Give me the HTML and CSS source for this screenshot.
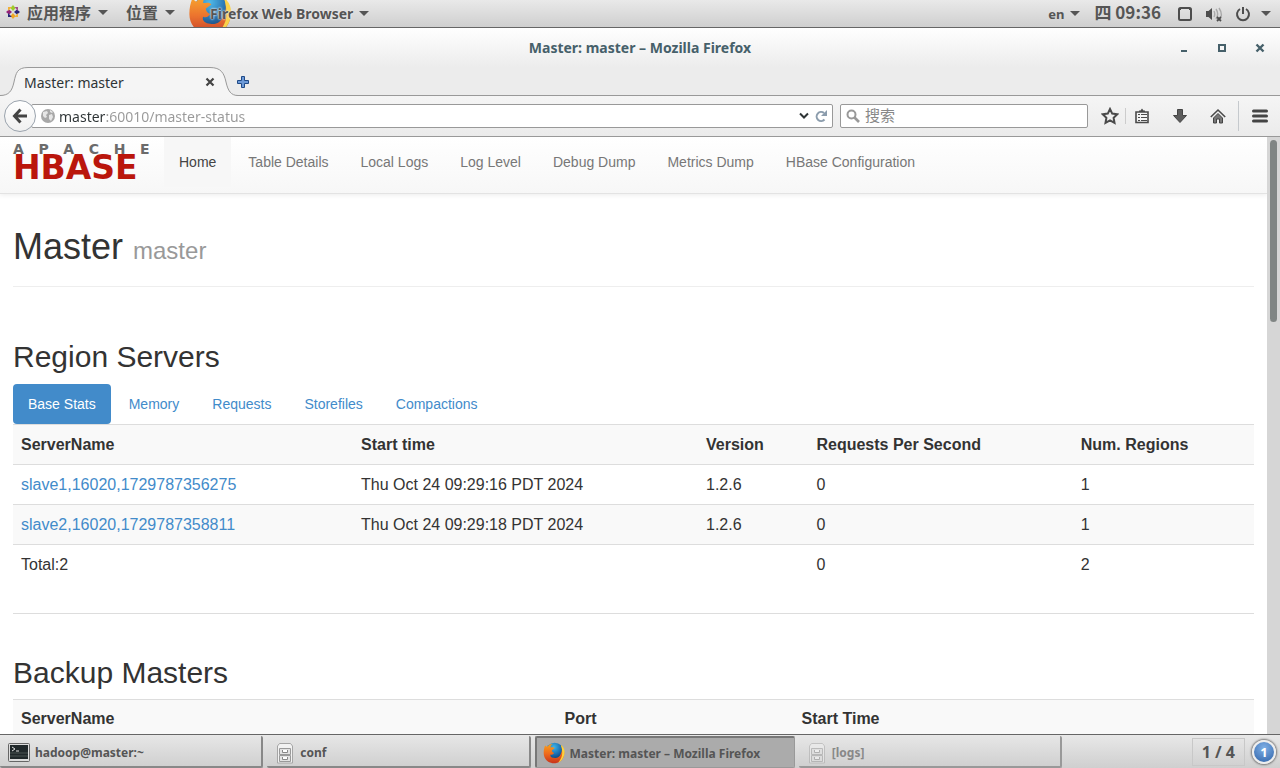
FILE: index.html
```html
<!DOCTYPE html>
<html lang="zh-CN">
<head>
<meta charset="utf-8">
<title>Master: master</title>
<link rel="stylesheet" href="styles.css">
</head>
<body>
<svg class="defs" aria-hidden="true">
  <defs>
    <linearGradient id="fox" x1="0" y1="0" x2="0" y2="1"><stop offset="0" stop-color="#f9a01b"/><stop offset=".5" stop-color="#ee6a1c"/><stop offset="1" stop-color="#c8321a"/></linearGradient>
    <radialGradient id="globe" cx=".45" cy=".25" r=".8"><stop offset="0" stop-color="#3fb6ea"/><stop offset=".55" stop-color="#1668ab"/><stop offset="1" stop-color="#0a2c5c"/></radialGradient>
    <symbol id="firefox" viewBox="0 0 32 32">
      <circle cx="17" cy="14" r="13" fill="url(#globe)"/>
      <path fill="url(#fox)" d="M3 5C2 8 1 11 1 16c0 9 7 15 15 15 9 0 15-7 15-15 0-5-2-9-5-12 2 5 2 9 0 13-2 5-6 7-10 6-4 0-6-3-5-5 2 1 4 0 5-2-2-1-3-2-3-4l4-3c-2-2-4-1-6-1 0-2 1-4 3-5-4 0-6 2-8 4-1-1-2-1-3-2z"/>
      <path fill="#fdd23b" d="M26 4c5 4 6 9 5 14-1 6-5 10-9 12 4-5 6-9 6-14 0-5-1-9-2-12z"/>
    </symbol>
    <symbol id="cabinet" viewBox="0 0 18 22">
      <path d="M1.500 21V4L3.500 1.500h11L16.500 4v17z" fill="#f2f2f2" stroke="#a5a5a5"/>
      <path d="M3.500 6.500h11v6h-11zM3.500 13.500h11v6h-11z" fill="#e2e2e2" stroke="#999"/>
      <path d="M6.500 8v2.500h5V8M6.500 15v2.500h5V15" fill="#fff" stroke="#888"/>
    </symbol>
  </defs>
</svg>

<header class="panel">
  <nav class="panel-group" aria-label="桌面菜单">
    <button class="panel-item cjk">
      <svg width="14" height="14" viewBox="0 0 14 14"><path d="M7 0l2.500 3L7 6 4.500 3z" fill="#9ccd2a"/><path d="M7 14l2.500-3L7 8l-2.500 3z" fill="#efa724"/><path d="M0 7l3-2.500L6 7 3 9.500z" fill="#932279"/><path d="M14 7l-3-2.500L8 7l3 2.500z" fill="#262577"/><path d="M2 2h3.500v.5l-3 3H2zM8.500 12H12V8.500h-.5z" fill="#efb03a"/><path d="M8.500 2H12v3.500h-.5z" fill="#a14f8c"/><path d="M2 8.500h.5l3 3v.5H2z" fill="#262577"/></svg>
      <span>应用程序</span><i class="arrow"></i>
    </button>
    <button class="panel-item cjk places"><span>位置</span><i class="arrow"></i></button>
    <button class="panel-item app-menu">
      <svg class="app-icon" width="44" height="44"><use href="#firefox"/></svg>
      <span class="app-name">Firefox Web Browser</span><i class="arrow"></i>
    </button>
  </nav>
  <div class="panel-group status">
    <button class="panel-item"><span>en</span><i class="arrow"></i></button>
    <time class="clock">四 09:36</time>
    <button class="panel-item" aria-label="屏幕"><svg width="16" height="16" viewBox="0 0 16 16" fill="none" stroke="#4d4d4d" stroke-width="2"><rect x="2" y="2" width="12" height="12" rx="1.500"/><path d="M2 5l3-3M11 2l3 3M2 12l2 2M12 14l2-2" stroke-width="1"/></svg></button>
    <button class="panel-item" aria-label="音量"><svg width="18" height="16" viewBox="0 0 18 16"><path d="M1 5h2.500L7 2v12l-3.500-3H1z" fill="#4d4d4d"/><path d="M9 5c1 2 1 4 0 6M11 3c2 3 2 7 0 10M14 2c2 3 3 6 2 9" fill="none" stroke="#aaa" stroke-width="1.400"/><path d="M12 11l4 4M16 11l-4 4" stroke="#4d4d4d" stroke-width="1.800"/></svg></button>
    <button class="panel-item" aria-label="电源"><svg width="16" height="16" viewBox="0 0 16 16" fill="none" stroke="#4d4d4d" stroke-width="2"><path d="M5 3a6 6 0 1 0 6 0M8 1v7"/></svg><i class="arrow"></i></button>
  </div>
</header>

<div class="titlebar">
  <div class="window-title">Master: master – Mozilla Firefox</div>
  <div class="window-buttons">
    <button aria-label="最小化"><svg width="10" height="10" viewBox="0 0 10 10"><path d="M2 7h6v2H2z" fill="#46606a"/></svg></button>
    <button aria-label="最大化"><svg width="10" height="10" viewBox="0 0 10 10"><path d="M2 2h6v6H2z" fill="none" stroke="#46606a" stroke-width="2"/></svg></button>
    <button aria-label="关闭"><svg width="10" height="10" viewBox="0 0 10 10"><path d="M1.500 1.500l7 7M8.500 1.500l-7 7" stroke="#46606a" stroke-width="2.400"/></svg></button>
  </div>
</div>

<div class="tabs">
  <div class="tab">
    <svg class="tab-shape" width="238" height="30" viewBox="0 0 238 30"><path d="M0 28.500C9 28.500 12 24 14 15C16 6 17 .5 28 .5H210C221 .5 224 6 226 15C228 24 231 28.500 238 28.500V30H0z" fill="#f5f5f5"/><path d="M0 28.500C9 28.500 12 24 14 15C16 6 17 .5 28 .5H210C221 .5 224 6 226 15C228 24 231 28.500 238 28.500" fill="none" stroke="#999"/></svg>
    <span class="tab-title">Master: master</span>
    <button class="tab-close" aria-label="关闭标签页"><svg width="10" height="10" viewBox="0 0 10 10"><path d="M1.500 1.500l7 7M8.500 1.500l-7 7" stroke="#444" stroke-width="2.200"/></svg></button>
  </div>
  <button class="new-tab" aria-label="新标签页"><svg width="12" height="12" viewBox="0 0 12 12"><path d="M4.500.5h3v4h4v3h-4v4h-3v-4h-4v-3h4z" fill="#6d9ad8" stroke="#204a87"/></svg></button>
</div>

<div class="toolbar">
  <button class="back" aria-label="后退"><svg width="16" height="16" viewBox="0 0 16 16" fill="none" stroke="#444" stroke-width="3"><path d="M8.500 1.500L2.500 8l6 6.500M3 8h12"/></svg></button>
  <div class="field url">
    <svg width="14" height="14" viewBox="0 0 14 14"><circle cx="7" cy="7" r="7" fill="#a8a8a8"/><path d="M2 3l4-1 1 2-2 2 1 2-2 1-2-2zM8 6l3-1 1 3-2 4-2-2zM9 1l3 2-1 1-2-1z" fill="#e6e6e6"/></svg>
    <input class="url-input" aria-label="地址" value="master:60010/master-status">
    <button aria-label="历史"><svg width="10" height="8" viewBox="0 0 10 8" fill="none" stroke="#2e3436" stroke-width="2"><path d="M1 1.500l4 4 4-4"/></svg></button>
    <button aria-label="刷新"><svg width="12" height="12" viewBox="0 0 12 12"><path d="M9.500 9.500A4.500 4.500 0 1 1 9 3" fill="none" stroke="#8c9dad" stroke-width="2"/><path d="M12 0v6H6z" fill="#8c9dad"/></svg></button>
  </div>
  <div class="field search">
    <svg width="14" height="14" viewBox="0 0 14 14" fill="none" stroke="#999"><circle cx="5.500" cy="5.500" r="4" stroke-width="2"/><path d="M8.500 8.500L13 13" stroke-width="2.600"/></svg>
    <input class="search-input" aria-label="搜索" placeholder="搜索">
  </div>
  <div class="tools">
    <button aria-label="收藏"><svg width="18" height="18" viewBox="0 0 18 18"><path d="M9 2l2.200 4.600 5 .7-3.600 3.500.9 5L9 13.400l-4.500 2.400.9-5L1.800 7.300l5-.7z" fill="none" stroke="#4a4a4a" stroke-width="2"/></svg></button>
    <button class="bookmarks" aria-label="书签"><svg width="16" height="16" viewBox="0 0 16 16"><path d="M2 4h12v10.500H2z" fill="#f4f4f4" stroke="#4a4a4a" stroke-width="1.600"/><path d="M5 4V2.500h1.500L8 .5l1.500 2H11V4z" fill="#4a4a4a"/><path d="M4 6.500h2M7 6.500h6M4 9.500h2M7 9.500h6M4 12.500h2M7 12.500h6" stroke="#4a4a4a" stroke-width="1.200"/></svg></button>
    <button aria-label="下载"><svg width="16" height="16" viewBox="0 0 16 16"><path d="M5.500 1.500h5v6h4L8 14.500 1.500 7.500h4z" fill="#5c5c5c" stroke="#444"/></svg></button>
    <button aria-label="主页"><svg width="16" height="16" viewBox="0 0 16 16"><path d="M.8 9L8 2l7.200 7" fill="none" stroke="#4a4a4a" stroke-width="1.600"/><path d="M3.500 10L8 5.500l4.500 4.500V15H9.500v-4h-3v4h-3z" fill="#777" stroke="#444"/></svg></button>
    <button class="menu" aria-label="菜单"><svg width="16" height="14" viewBox="0 0 16 14" stroke="#444" stroke-width="3" stroke-linecap="round"><path d="M1.500 2h13M1.500 7h13M1.500 12h13"/></svg></button>
  </div>
</div>

<div class="viewport">
  <div class="page">
    <nav class="navbar">
      <a class="brand" href="#" aria-label="Apache HBase"><span class="brand-top">A   P   A   C   H   E</span><span class="brand-name">HBASE</span></a>
      <a class="nav-link current" href="#">Home</a>
      <a class="nav-link" href="#">Table Details</a>
      <a class="nav-link" href="#">Local Logs</a>
      <a class="nav-link" href="#">Log Level</a>
      <a class="nav-link" href="#">Debug Dump</a>
      <a class="nav-link" href="#">Metrics Dump</a>
      <a class="nav-link" href="#">HBase Configuration</a>
    </nav>
    <main class="container">
      <h1 class="page-header">Master <small>master</small></h1>
      <section class="section">
        <h2>Region Servers</h2>
        <div class="pills">
          <a class="pill on" href="#">Base Stats</a>
          <a class="pill" href="#">Memory</a>
          <a class="pill" href="#">Requests</a>
          <a class="pill" href="#">Storefiles</a>
          <a class="pill" href="#">Compactions</a>
        </div>
        <table class="table servers">
          <colgroup><col class="c-name"><col class="c-start"><col class="c-version"><col class="c-requests"><col></colgroup>
          <tbody>
            <tr><th>ServerName</th><th>Start time</th><th>Version</th><th>Requests Per Second</th><th>Num. Regions</th></tr>
            <tr><td><a href="#">slave1,16020,1729787356275</a></td><td>Thu Oct 24 09:29:16 PDT 2024</td><td>1.2.6</td><td>0</td><td>1</td></tr>
            <tr><td><a href="#">slave2,16020,1729787358811</a></td><td>Thu Oct 24 09:29:18 PDT 2024</td><td>1.2.6</td><td>0</td><td>1</td></tr>
            <tr><td>Total:2</td><td></td><td></td><td>0</td><td>2</td></tr>
          </tbody>
        </table>
      </section>
      <section class="section backup">
        <h2>Backup Masters</h2>
        <table class="table">
          <colgroup><col class="c-host"><col class="c-port"><col></colgroup>
          <tbody><tr><th>ServerName</th><th>Port</th><th>Start Time</th></tr></tbody>
        </table>
      </section>
    </main>
  </div>
  <div class="scrollbar"><div class="thumb"></div></div>
</div>

<footer class="taskbar">
  <div class="tasks">
    <button class="task"><svg width="22" height="20" viewBox="0 0 22 20"><rect x=".5" y=".5" width="21" height="18" rx="1" fill="#ddd" stroke="#666"/><rect x="2" y="2" width="18" height="14" fill="#20282a"/><path d="M4 4l3 2-3 2M8 8h3" stroke="#ddd" fill="none"/><path d="M2 10h18M2 13h18" stroke="#4a5553"/></svg><span>hadoop@master:~</span></button>
    <button class="task"><svg width="20" height="22"><use href="#cabinet"/></svg><span>conf</span></button>
    <button class="task active"><svg width="22" height="22"><use href="#firefox"/></svg><span>Master: master – Mozilla Firefox</span></button>
    <button class="task minimized"><svg width="20" height="22"><use href="#cabinet"/></svg><span>[logs]</span></button>
  </div>
  <div class="workspace">1 / 4</div>
  <button class="notify">1</button>
</footer>
</body>
</html>
```
FILE: styles.css
```css
* { box-sizing: border-box; }
html, body { height: 100%; }
body {
  margin: 0;
  display: flex;
  flex-direction: column;
  overflow: hidden;
  background: #fff;
  font-family: "Noto Sans", "Noto Sans CJK SC", sans-serif;
  font-size: 13px;
  color: #2e3436;
}
button {
  display: flex;
  align-items: center;
  margin: 0;
  padding: 0;
  border: 0;
  background: none;
  font: inherit;
  color: inherit;
}
svg { display: block; flex: none; }
a { text-decoration: none; color: #428bca; }
.defs { position: absolute; width: 0; height: 0; }

.panel {
  display: flex;
  justify-content: space-between;
  flex: none;
  height: 28px;
  padding: 0 9px 0 6px;
  background: linear-gradient(#e9e9e9, #cfcfcf);
  border-bottom: 1px solid #666;
  color: #555;
  font-weight: bold;
  overflow: hidden;
}
.panel-group { display: flex; align-items: center; }
.panel-item { gap: 6px; white-space: nowrap; }
.cjk { font-family: "Noto Sans CJK SC", sans-serif; font-size: 16px; line-height: 24px; gap: 7px; padding-bottom: 3px; }
.places { margin-left: 18px; }
.app-menu { margin-left: 13px; font-size: 14px; }
.app-icon { margin-right: -28px; opacity: .9; }
.app-name { position: relative; text-shadow: 0 0 2px #eee, 0 0 2px #eee; }
.arrow {
  border: 5px solid transparent;
  border-top-color: #555;
  border-bottom: 0;
}
.status { gap: 12px; }
.status .panel-item:last-child { gap: 10px; }
.clock { margin: 0 4px 0 2px; padding-bottom: 3px; font-family: "Noto Sans CJK SC", sans-serif; font-size: 17px; line-height: 24px; }

.titlebar {
  display: grid;
  grid-template-columns: 1fr auto 1fr;
  align-items: center;
  flex: none;
  height: 39px;
  background: linear-gradient(#fff, #ececec);
}
.window-title { grid-column: 2; color: #46606a; font-size: 14px; font-weight: bold; }
.window-buttons { display: flex; justify-content: flex-end; gap: 28px; padding-right: 15px; }

.tabs {
  display: flex;
  align-items: center;
  flex: none;
  height: 29px;
  background: #ececec;
  border-bottom: 1px solid #999;
}
.tab {
  position: relative;
  display: flex;
  align-items: center;
  justify-content: space-between;
  width: 237px;
  height: 29px;
  padding: 2px 22px 0 24px;
  font-size: 14px;
}
.tab-shape { position: absolute; left: 0; top: 0; }
.tab-title, .tab-close { position: relative; }
.new-tab { padding-top: 2px; }

.toolbar {
  display: flex;
  align-items: center;
  flex: none;
  height: 41px;
  padding: 0 12px 0 4px;
  background: linear-gradient(#f5f5f5, #ebebeb);
  border-bottom: 1px solid #999;
}
.back {
  position: relative;
  justify-content: center;
  width: 32px;
  height: 32px;
  border: 1px solid #9aa3ad;
  border-radius: 50%;
  background: linear-gradient(#fff, #f0f0f0);
}
.field {
  display: flex;
  align-items: center;
  height: 24px;
  background: #fff;
  border: 1px solid #999;
  border-radius: 2px;
}
.field input {
  min-width: 0;
  flex: 1;
  padding: 0;
  border: 0;
  outline: 0;
  background: none;
  font: inherit;
}
.url { flex: 1; margin-left: -5px; padding: 0 5px 0 9px; gap: 6px; }
.url .url-input {
  margin-left: -2px;
  font-size: 14px;
  color: transparent;
  background: linear-gradient(90deg, #2e3436 47px, #999 47px) text;
  -webkit-background-clip: text;
}
.search { width: 248px; margin-left: 7px; padding: 0 5px; gap: 5px; }
.search-input::placeholder { color: #888; font-family: "Noto Sans CJK SC", sans-serif; font-size: 15px; }
.tools { display: flex; align-items: center; margin-left: 13px; }
.bookmarks { margin-left: 6px; padding-left: 8px; border-left: 1px solid #ccc; }
.bookmarks + button, .bookmarks + button + button { margin-left: 22px; }
.menu { height: 30px; margin-left: 12px; padding-left: 13px; border-left: 1px solid #c5c9cd; }

.viewport { display: flex; flex: 1; min-height: 0; overflow: hidden; }
.page {
  flex: 1;
  min-width: 0;
  overflow: hidden;
  font-family: "Liberation Sans", Arial, sans-serif;
  font-size: 16px;
  color: #333;
}
.navbar {
  display: flex;
  align-items: flex-start;
  gap: 2px;
  height: 57px;
  padding-left: 13px;
  background: linear-gradient(#fff, #f7f7f7);
  border-bottom: 1px solid #e3e3e3;
  box-shadow: 0 1px 5px rgba(0, 0, 0, .08);
}
.brand {
  display: flex;
  flex-direction: column;
  width: 149px;
  padding-top: 5px;
  font-family: "DejaVu Sans", sans-serif;
  font-weight: bold;
  white-space: pre;
}
.brand-top { font-size: 14px; line-height: 14px; color: #6b6b6b; }
.brand-name { font-size: 33px; line-height: 24px; color: #ba160c; }
.nav-link { padding: 15px; font-size: 14px; line-height: 20px; color: #777; }
.nav-link.current { color: #444; background: #f7f7f7; }
.container { padding: 0 13px; }
h1, h2 { margin: 0; font-weight: normal; }
.page-header {
  padding: 33px 0 15px;
  border-bottom: 1px solid #eee;
  font-size: 36px;
  line-height: 40px;
}
.page-header small { font-size: 24px; color: #999; }
.section { padding-top: 53px; }
h2 { font-size: 30px; line-height: 34px; margin-bottom: 10px; }
.pills { display: flex; gap: 3px; }
.pill { padding: 10px 15px; border-radius: 4px; font-size: 14px; line-height: 20px; }
.pill.on { color: #fff; background: #428bca; }
.table { width: 100%; border-collapse: collapse; table-layout: fixed; }
.table th, .table td {
  height: 40px;
  padding: 8px;
  border-top: 1px solid #ddd;
  text-align: left;
  line-height: 22px;
  white-space: nowrap;
}
.table tr:nth-child(odd) { background: #f9f9f9; }
.c-name { width: 27.4%; }
.c-start { width: 27.8%; }
.c-version { width: 8.9%; }
.c-requests { width: 21.3%; }
.c-host { width: 43.8%; }
.c-port { width: 19.1%; }
.backup { margin-top: 28px; padding-top: 42px; border-top: 1px solid #ddd; }
.backup h2 { margin-bottom: 9px; }
.scrollbar { width: 13px; padding: 3px; background: #d6d6d6; }
.thumb { width: 7px; height: 182px; border-radius: 4px; background: #808584; }

.taskbar {
  display: flex;
  align-items: center;
  flex: none;
  height: 34px;
  padding-right: 4px;
  background: linear-gradient(#e8e8e8, #cfcfcf);
  border-top: 1px solid #666;
  color: #555;
  font-weight: bold;
}
.tasks { display: flex; flex: 1; gap: 4px; max-width: 1062px; }
.task {
  flex: 1;
  height: 32px;
  gap: 5px;
  padding: 4px 8px 0;
  border: solid #888;
  border-width: 0 2px 2px 0;
  border-radius: 2px;
  background: linear-gradient(#e6e6e6, #d0d0d0);
  font-size: 12px;
}
.task.active { padding: 2px 6px 0; background: #ababab; border-color: #777 #999 #999 #777; border-width: 2px 1px 1px 2px; }
.task.minimized { color: #888; border-color: #999; }
.task.minimized svg { opacity: .5; }
.workspace {
  margin-left: auto;
  padding: 2px 9px;
  border: 1px solid #c8c8c8;
  font-size: 16px;
  line-height: 22px;
}
.notify {
  justify-content: center;
  width: 24px;
  height: 24px;
  margin-left: 7px;
  border: 2px solid #eee;
  border-radius: 50%;
  background: radial-gradient(circle at 50% 30%, #7fb0e6, #2f62a8);
  box-shadow: 0 0 2px 1px #777;
  color: #fff;
}
```
